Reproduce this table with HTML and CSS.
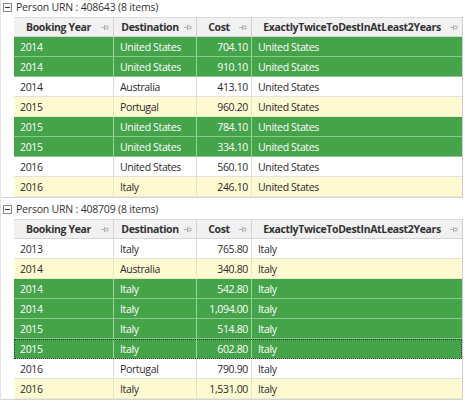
FILE: index.html
```html
<!DOCTYPE html>
<html>
<head>
<meta charset="utf-8">
<link rel="stylesheet" href="styles.css">
</head>
<body>
<div class="grid">
  <div class="group">
    <div class="group-head"><span class="toggle"></span><span class="group-title">Person URN : 408643 (8 items)</span></div>
    <div class="table">
      <div class="row head">
        <div class="hcell"><span class="hlabel">Booking Year</span><svg class="pin" viewBox="0 0 8 7"><path d="M0 3.5H3.5M3.5 1V6M4 2.2H7V4.8H4"/></svg></div>
        <div class="hcell"><span class="hlabel">Destination</span><svg class="pin" viewBox="0 0 8 7"><path d="M0 3.5H3.5M3.5 1V6M4 2.2H7V4.8H4"/></svg></div>
        <div class="hcell"><span class="hlabel">Cost</span><svg class="pin" viewBox="0 0 8 7"><path d="M0 3.5H3.5M3.5 1V6M4 2.2H7V4.8H4"/></svg></div>
        <div class="hcell"><span class="hlabel">ExactlyTwiceToDestInAtLeast2Years</span><svg class="pin" viewBox="0 0 8 7"><path d="M0 3.5H3.5M3.5 1V6M4 2.2H7V4.8H4"/></svg></div>
      </div>
      <div class="row green"><div class="cell">2014</div><div class="cell">United States</div><div class="cell num">704.10</div><div class="cell">United States</div></div>
      <div class="row green"><div class="cell">2014</div><div class="cell">United States</div><div class="cell num">910.10</div><div class="cell">United States</div></div>
      <div class="row white"><div class="cell">2014</div><div class="cell">Australia</div><div class="cell num">413.10</div><div class="cell">United States</div></div>
      <div class="row yellow"><div class="cell">2015</div><div class="cell">Portugal</div><div class="cell num">960.20</div><div class="cell">United States</div></div>
      <div class="row green"><div class="cell">2015</div><div class="cell">United States</div><div class="cell num">784.10</div><div class="cell">United States</div></div>
      <div class="row green"><div class="cell">2015</div><div class="cell">United States</div><div class="cell num">334.10</div><div class="cell">United States</div></div>
      <div class="row white"><div class="cell">2016</div><div class="cell">United States</div><div class="cell num">560.10</div><div class="cell">United States</div></div>
      <div class="row yellow"><div class="cell">2016</div><div class="cell">Italy</div><div class="cell num">246.10</div><div class="cell">United States</div></div>
    </div>
  </div>
  <div class="group">
    <div class="group-head"><span class="toggle"></span><span class="group-title">Person URN : 408709 (8 items)</span></div>
    <div class="table">
      <div class="row head">
        <div class="hcell"><span class="hlabel">Booking Year</span><svg class="pin" viewBox="0 0 8 7"><path d="M0 3.5H3.5M3.5 1V6M4 2.2H7V4.8H4"/></svg></div>
        <div class="hcell"><span class="hlabel">Destination</span><svg class="pin" viewBox="0 0 8 7"><path d="M0 3.5H3.5M3.5 1V6M4 2.2H7V4.8H4"/></svg></div>
        <div class="hcell"><span class="hlabel">Cost</span><svg class="pin" viewBox="0 0 8 7"><path d="M0 3.5H3.5M3.5 1V6M4 2.2H7V4.8H4"/></svg></div>
        <div class="hcell"><span class="hlabel">ExactlyTwiceToDestInAtLeast2Years</span><svg class="pin" viewBox="0 0 8 7"><path d="M0 3.5H3.5M3.5 1V6M4 2.2H7V4.8H4"/></svg></div>
      </div>
      <div class="row white"><div class="cell">2013</div><div class="cell">Italy</div><div class="cell num">765.80</div><div class="cell">Italy</div></div>
      <div class="row yellow"><div class="cell">2014</div><div class="cell">Australia</div><div class="cell num">340.80</div><div class="cell">Italy</div></div>
      <div class="row green"><div class="cell">2014</div><div class="cell">Italy</div><div class="cell num">542.80</div><div class="cell">Italy</div></div>
      <div class="row green"><div class="cell">2014</div><div class="cell">Italy</div><div class="cell num">1,094.00</div><div class="cell">Italy</div></div>
      <div class="row green"><div class="cell">2015</div><div class="cell">Italy</div><div class="cell num">514.80</div><div class="cell">Italy</div></div>
      <div class="row green focus"><div class="cell">2015</div><div class="cell">Italy</div><div class="cell num">602.80</div><div class="cell">Italy</div></div>
      <div class="row white"><div class="cell">2016</div><div class="cell">Portugal</div><div class="cell num">790.90</div><div class="cell">Italy</div></div>
      <div class="row yellow"><div class="cell">2016</div><div class="cell">Italy</div><div class="cell num">1,531.00</div><div class="cell">Italy</div></div>
    </div>
  </div>
</div>
</body>
</html>
```

FILE: styles.css
```css
html, body {
  margin: 0;
  padding: 0;
  background: #ffffff;
}

body {
  font-family: "Open Sans", "Noto Sans", sans-serif;
  font-size: 10.5px;
  letter-spacing: -0.35px;
  color: #2b2b2b;
}

.grid {
  width: 463px;
  margin-top: -3px;
}

.group {
  border-bottom: 1px solid #d4d4d4;
  border-left: 1px solid #e4e4e4;
  margin-bottom: 1px;
}

.group-head {
  height: 20px;
  display: flex;
  align-items: center;
  padding-left: 2px;
  box-sizing: border-box;
}

.toggle {
  position: relative;
  width: 7px;
  height: 7px;
  border: 1px solid #8a8a8a;
  background: #fff;
  margin-right: 4px;
  margin-top: 1px;
}

.toggle::after {
  content: "";
  position: absolute;
  left: 1px;
  top: 3px;
  width: 5px;
  height: 1px;
  background: #333;
}

.group-title {
  color: #333;
  font-size: 10.5px;
  letter-spacing: -0.2px;
  line-height: 1;
  margin-top: 1px;
}

.table {
  margin-left: 13px;
  width: 448px;
  border-right: 1px solid #d0d0d0;
}

.row {
  display: grid;
  grid-template-columns: 100px 83px 55px 210px;
  height: 20px;
  box-sizing: border-box;
  border-bottom: 1px solid #e3e3e3;
}

.head {
  background: #f1f1f1;
  border-top: 1px solid #dadada;
  border-bottom: 1px solid #d6d6d6;
}

.hcell {
  display: flex;
  align-items: center;
  border-right: 1px solid #d4d4d4;
  padding: 0 4px;
  font-weight: 700;
  font-size: 10.5px;
  letter-spacing: -0.35px;
  color: #333;
}

.hcell:last-child {
  border-right: none;
}

.hlabel {
  flex: 1;
  text-align: center;
  white-space: nowrap;
}

.pin {
  width: 8px;
  height: 7px;
  flex: none;
  fill: none;
  stroke: #a8a8a8;
  stroke-width: 0.9;
  margin-left: 2px;
}

.cell {
  display: flex;
  align-items: center;
  padding: 0 5px 0 6px;
  border-right: 1px solid #dcdcdc;
  white-space: nowrap;
  overflow: hidden;
}

.cell:last-child {
  border-right: none;
}

.cell.num {
  justify-content: flex-end;
  padding-right: 3px;
}

.white {
  background: #ffffff;
}

.yellow {
  background: #fffad2;
  border-bottom-color: #ece9c8;
}

.yellow .cell {
  border-right-color: #e8e4c0;
}

.green {
  background: #45a34a;
  color: #ffffff;
  border-bottom-color: #8bc98e;
}

.green .cell {
  border-right-color: #9ad29d;
}

.focus {
  outline: 1px dotted #2a3a2a;
  outline-offset: -1px;
}
```
